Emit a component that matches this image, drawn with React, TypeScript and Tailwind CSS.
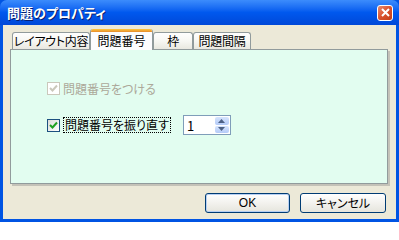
import React from "react"

const font = "[font-family:'Noto_Sans_CJK_JP','Liberation_Sans',sans-serif] [font-feature-settings:'palt']"

function Tab({ label, width, active }: { label: string; width: string; active?: boolean }) {
  if (active) {
    return (
      <div className={`relative z-10 -mb-px flex h-[21px] ${width} flex-col overflow-hidden rounded-t-[3px] border-x border-[#919b9c] bg-[#fcfcfe]`}>
        <div className="h-[3px] shrink-0 bg-gradient-to-b from-[#ffc83c] to-[#e68b2c]" />
        <div className="flex flex-1 items-center justify-center whitespace-nowrap pb-[1px] text-[12px] leading-none text-black">{label}</div>
      </div>
    )
  }
  return (
    <div
      className={`flex h-[17px] ${width} items-center justify-center whitespace-nowrap rounded-t-[3px] border border-b-0 border-[#919b9c] bg-gradient-to-b from-[#fefefe] via-[#f7f7f3] to-[#e9e8e0] text-[12px] leading-none tracking-[-0.3px] text-black`}
    >
      {label}
    </div>
  )
}

function CheckMark({ color }: { color: string }) {
  return (
    <svg width="9" height="9" viewBox="0 0 9 9">
      <path d="M1 4 L3.5 6.5 L8 1.5" fill="none" stroke={color} strokeWidth="2" />
    </svg>
  )
}

export default function App() {
  return (
    <div className={`flex h-[222px] w-[399px] flex-col bg-[#0054e3] ${font}`}>
      {/* title bar */}
      <div className="flex h-[25px] shrink-0 items-center justify-between rounded-t-[7px] bg-gradient-to-b from-[#3c8cfc] via-[#0058ee] to-[#0048d8] pl-[7px] pr-[6px]">
        <span className="text-[13px] font-bold leading-none text-white [text-shadow:1px_1px_0_#0a1f6e]">問題のプロパティ</span>
        <div className="flex h-[16px] w-[16px] items-center justify-center rounded-[3px] border border-white bg-gradient-to-br from-[#e88a6d] via-[#d9512d] to-[#c33d14]">
          <svg width="9" height="9" viewBox="0 0 9 9">
            <path d="M1 1 L8 8 M8 1 L1 8" stroke="white" strokeWidth="2" />
          </svg>
        </div>
      </div>

      {/* client area */}
      <div className="mx-[3px] mb-[3px] flex flex-1 flex-col bg-[#ece9d8] px-[7px] pt-[4px]">
        <div className="flex items-end pl-[2px]">
          <Tab label="レイアウト内容" width="w-[78px]" />
          <Tab label="問題番号" width="w-[63px]" active />
          <Tab label="枠" width="w-[40px]" />
          <Tab label="問題間隔" width="w-[58px]" />
        </div>

        <div className="h-[135px] w-[378px] border border-[#919b9c] bg-[#e2fdf0] shadow-[2px_2px_0_#c4c2b8]">
          <div className="flex flex-col pl-[36px] pt-[32px]">
            <div className="flex items-center gap-[3px] text-[12px] leading-none text-[#aca899]">
              <div className="flex h-[13px] w-[13px] items-center justify-center border border-[#cac8bb] bg-white">
                <CheckMark color="#cac8bb" />
              </div>
              問題番号をつける
            </div>

            <div className="mt-[20px] flex items-center">
              <div className="flex items-center gap-[3px] text-[12px] leading-none text-black">
                <div className="flex h-[13px] w-[13px] items-center justify-center border border-[#1c5180] bg-gradient-to-br from-[#dcdcd7] to-white">
                  <CheckMark color="#21a121" />
                </div>
                <span className="border border-dotted border-black px-[1px] py-[1px]">問題番号を振り直す</span>
              </div>
              <div className="ml-[12px] flex h-[20px] w-[48px] items-center border border-[#7f9db9] bg-white">
                <span className="flex-1 pl-[3px] text-[13px] leading-none text-black">1</span>
                <div className="flex h-full w-[16px] flex-col gap-px p-px">
                  <div className="flex flex-1 items-center justify-center rounded-[2px] bg-gradient-to-b from-[#d6e4fd] to-[#b4cbf8]">
                    <svg width="7" height="4" viewBox="0 0 7 4"><path d="M0 4 L3.5 0 L7 4 Z" fill="#4d6185" /></svg>
                  </div>
                  <div className="flex flex-1 items-center justify-center rounded-[2px] bg-gradient-to-b from-[#d6e4fd] to-[#b4cbf8]">
                    <svg width="7" height="4" viewBox="0 0 7 4"><path d="M0 0 L3.5 4 L7 0 Z" fill="#4d6185" /></svg>
                  </div>
                </div>
              </div>
            </div>
          </div>
        </div>

        <div className="mt-[9px] flex justify-end gap-[10px] pr-[3px]">
          <button className="h-[20px] w-[85px] rounded-[3px] border border-[#003c74] bg-gradient-to-b from-white to-[#e6e5dd] text-[12px] font-normal leading-none text-black shadow-[inset_0_0_0_1px_#b7d0f3] [font-family:'Liberation_Sans',sans-serif]">
            OK
          </button>
          <button className="h-[20px] w-[86px] rounded-[3px] border border-[#003c74] bg-gradient-to-b from-white to-[#e6e5dd] text-[12px] leading-none text-black">
            キャンセル
          </button>
        </div>
      </div>
    </div>
  )
}
